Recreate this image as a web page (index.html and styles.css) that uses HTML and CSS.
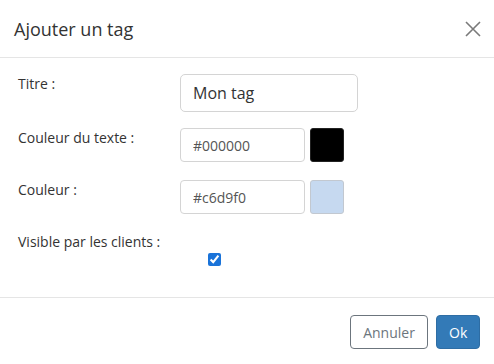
FILE: index.html
```html
<!DOCTYPE html>
<html lang="fr">
<head>
<meta charset="utf-8">
<title>Ajouter un tag</title>
<link rel="stylesheet" href="styles.css">
</head>
<body>
<div class="modal">
  <div class="modal-header">
    <h4 class="modal-title">Ajouter un tag</h4>
    <button class="close" type="button" aria-label="Fermer">
      <svg width="16" height="16" viewBox="0 0 16 16"><path d="M1 1 L15 15 M15 1 L1 15" stroke="#7a7a7a" stroke-width="1.6" fill="none"/></svg>
    </button>
  </div>
  <div class="modal-body">
    <div class="row row-title">
      <label class="label">Titre :</label>
      <input class="input input-title" type="text" value="Mon tag">
    </div>
    <div class="row row-color">
      <label class="label">Couleur du texte :</label>
      <div class="color-group">
        <input class="input input-hex" type="text" value="#000000">
        <span class="swatch swatch-black"></span>
      </div>
    </div>
    <div class="row row-color">
      <label class="label">Couleur :</label>
      <div class="color-group">
        <input class="input input-hex" type="text" value="#c6d9f0">
        <span class="swatch swatch-blue"></span>
      </div>
    </div>
    <div class="row-visible">
      <label class="label">Visible par les clients :</label>
      <input class="check" type="checkbox" checked>
    </div>
  </div>
  <div class="modal-footer">
    <button class="btn btn-cancel" type="button">Annuler</button>
    <button class="btn btn-ok" type="button">Ok</button>
  </div>
</div>
</body>
</html>
```
FILE: styles.css
```css
html, body {
  margin: 0;
  padding: 0;
  background: #fff;
}
body {
  font-family: "Open Sans", "Noto Sans", sans-serif;
  color: #333;
  font-size: 14px;
  line-height: 20px;
}
.modal {
  width: 494px;
}
.modal-header {
  height: 57px;
  border-bottom: 1px solid #e5e5e5;
  display: flex;
  align-items: center;
  justify-content: space-between;
  padding: 0 13px 0 14px;
  box-sizing: content-box;
}
.modal-title {
  margin: 0;
  font-size: 18px;
  font-weight: 400;
  line-height: 24px;
  color: #333;
}
.close {
  border: 0;
  background: none;
  padding: 0;
  width: 16px;
  height: 16px;
  display: flex;
  margin-top: 0;
}
.modal-body {
  height: 239px;
  box-sizing: border-box;
  padding: 16px 18px 0 18px;
}
.row {
  display: flex;
  align-items: flex-start;
}
.label {
  width: 162px;
  flex: none;
  color: #333;
}
.row-title {
  height: 38px;
  margin-bottom: 16px;
}
.row-color {
  height: 34px;
  margin-bottom: 18px;
}
.input {
  box-sizing: border-box;
  border: 1px solid #d4d4d4;
  border-radius: 5px;
  font-family: "Open Sans", "Noto Sans", sans-serif;
  padding: 0 12px;
  margin: 0;
  background: #fff;
  outline: none;
}
.input-title {
  width: 178px;
  height: 38px;
  font-size: 16px;
  color: #333;
}
.color-group {
  display: flex;
  gap: 5px;
}
.input-hex {
  width: 125px;
  height: 34px;
  font-size: 14px;
  color: #555;
  border-radius: 4px;
}
.swatch {
  display: block;
  width: 34px;
  height: 34px;
  box-sizing: border-box;
  border-radius: 3px;
}
.swatch-black {
  background: #000;
  border: 1px solid #222;
}
.swatch-blue {
  background: #c6d9f0;
  border: 1px solid #c2c8d0;
}
.row-visible {
  display: flex;
  flex-direction: column;
}
.row-visible .label {
  width: auto;
}
.check {
  width: 13px;
  height: 13px;
  margin: 1px 0 0 190px;
  accent-color: #1a73d9;
}
.modal-footer {
  border-top: 1px solid #e5e5e5;
  display: flex;
  justify-content: flex-end;
  gap: 8px;
  padding: 17px 14px 0 14px;
}
.btn {
  height: 34px;
  box-sizing: border-box;
  border-radius: 4px;
  font-family: "Open Sans", "Noto Sans", sans-serif;
  font-size: 14px;
  padding: 0 12px;
  margin: 0;
}
.btn-cancel {
  width: 78px;
  background: #fff;
  color: #6c757d;
  border: 1px solid #6c757d;
}
.btn-ok {
  width: 44px;
  background: #337ab7;
  color: #fff;
  border: 1px solid #2e6da4;
}
```
